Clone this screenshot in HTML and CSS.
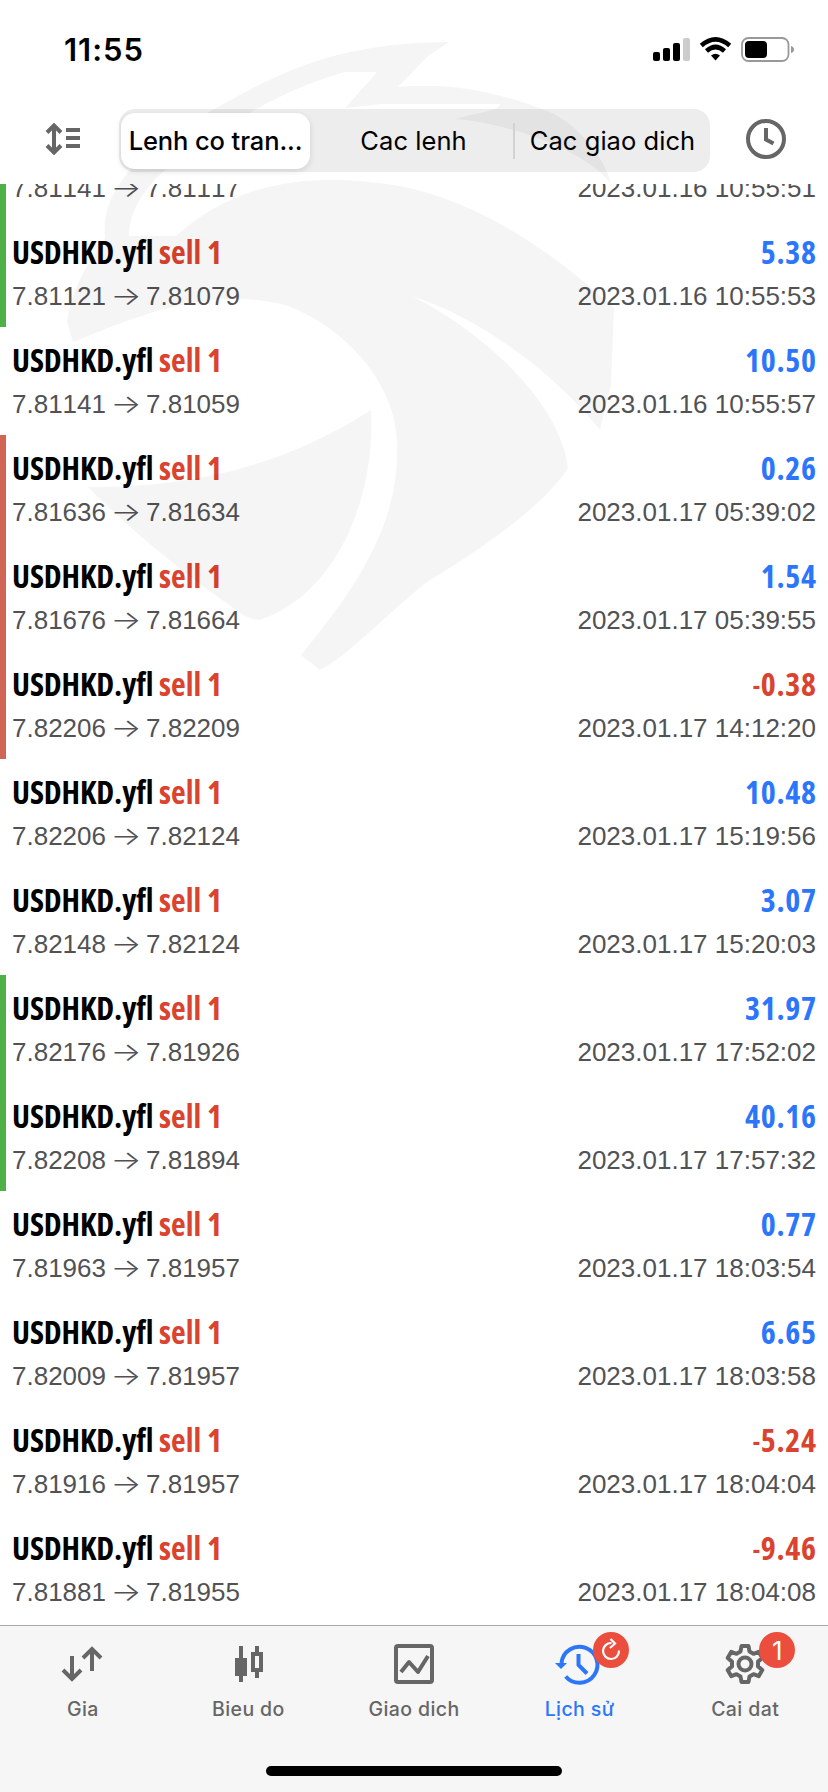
FILE: index.html
```html
<!DOCTYPE html>
<html lang="vi">
<head>
<meta charset="utf-8">
<title>Lịch sử</title>
<link rel="stylesheet" href="styles.css">
</head>
<body>
<div class="screen">
  <svg class="watermark" width="828" height="700" viewBox="0 0 828 700" aria-hidden="true">
    <path d="M105 238 C102 205 118 180 145 155 C165 137 190 121 220 106 C280 72 340 42 449 42 L428 56 L398 87 C450 82 500 92 550 112 C580 126 606 160 611 184 C590 155 520 125 456 119 C480 112 500 110 500 104 L384 104 L345 108 L377 72 L345 72 C310 82 260 102 215 136 C150 172 130 205 129 236 L176 236 C240 178 320 172 400 186 C470 200 540 240 614 308 L611 385 L600 430 C560 380 490 322 412 296 C480 330 560 400 568 468 C545 505 480 550 430 580 C390 610 350 655 320 670 L301 655 C350 595 398 530 397 450 C400 390 350 330 288 306 C210 285 140 315 73 342 L67 322 C70 295 84 268 105 238 Z"/>
    <path d="M88 487 C200 488 290 462 371 410 C376 500 335 595 260 620 C245 620 235 608 222 600 C180 570 130 530 88 487 Z"/>
  </svg>

  <div class="status">
    <span class="time">11:55</span>
    <svg width="146" height="28" viewBox="0 0 146 28">
      <rect x="1" y="15" width="7" height="9" rx="2"/><rect x="11" y="11" width="7" height="13" rx="2"/><rect x="21" y="6" width="7" height="18" rx="2"/><rect x="31" y="1" width="7" height="23" rx="2" fill="#ccc"/>
      <g fill="none" stroke="#000" stroke-width="4.600"><path d="M49.300 8.600 Q63.500 -3.800 77.700 8.600"/><path d="M54.500 14 Q63.500 6 72.500 14"/></g><path d="M59 18.500 Q63.500 15 68 18.500 L63.500 23.500Z"/>
      <rect x="90" y="1" width="46.500" height="23" rx="6.500" fill="none" stroke="#999" stroke-width="1.800"/><rect x="93" y="4" width="22" height="17" rx="4"/><path d="M139 9 Q142 10 142 12.500 Q142 15 139 16Z" fill="#999"/>
    </svg>
  </div>

  <header class="nav">
    <svg class="sort" width="36" height="32" viewBox="0 0 36 32" fill="none" stroke="#666" stroke-width="4"><path d="M9 3V29M2 9.500L9 2.500L16 9.500M2 22.500L9 29.500L16 22.500M21 7H35M21 15H35M21 23H35"/></svg>
    <div class="segments">
      <span class="seg on">Lenh co tran...</span><span class="seg mid">Cac lenh</span><span class="seg last">Cac giao dich</span>
    </div>
    <svg class="clock" width="40" height="40" viewBox="0 0 40 40" fill="none" stroke="#666" stroke-width="4"><circle cx="20" cy="20" r="18"/><path d="M20 9V20.500L27.500 24.500"/></svg>
  </header>

  <main class="list" id="list"></main>

  <nav class="tabs">
    <div class="tab"><svg width="44" height="40" viewBox="0 0 44 40" fill="none" stroke="#666" stroke-width="4"><path d="M11 12V36M2 26L11 35L20 26M31 27V4M22 14L31 5L40 14"/></svg><span>Gia</span></div>
    <div class="tab"><svg width="44" height="40" viewBox="0 0 44 40" fill="#666"><path d="M13 2h4v12h4v18h-4v6h-4v-6h-4v-18h4zM29 2h4v6h6v20h-4v6h-4v-6h-6v-20h4zM29 12v12h4v-12z" fill="none"/><path d="M13 2h4v12h4v18h-4v6h-4v-6H9V14h4zM29 2h4v6h4v20h-4v6h-4v-6h-4V8h4zM29 12v12h4V12z" fill-rule="evenodd"/></svg><span>Bieu do</span></div>
    <div class="tab"><svg width="44" height="40" viewBox="0 0 44 40" fill="none" stroke="#666" stroke-width="4" stroke-linejoin="round"><rect x="4" y="2" width="36" height="36" rx="2"/><path d="M9 28L17 18L26 28L36 12"/></svg><span>Giao dich</span></div>
    <div class="tab active"><svg width="44" height="40" viewBox="0 0 44 40" fill="none" stroke="#2b76fa" stroke-width="4"><path d="M3.500 19A18 18 0 1 1 7.700 32.500M20.500 10V21L29 29.500"/><path d="M-3 19H9L3 25Z" fill="#2b76fa" stroke="none"/></svg><span>Lịch sử</span>
      <b class="badge"><svg width="22" height="24" viewBox="0 0 22 24" fill="none" stroke="#fff" stroke-width="2.200"><path d="M11.500 5A8 8 0 1 0 19 12.500M10.500 1L15 5.500L10 10"/></svg></b></div>
    <div class="tab"><svg width="44" height="40" viewBox="0 0 44 40" fill="none" stroke="#666" stroke-width="4" stroke-linejoin="round"><path d="M18.500 2h7l1 5.500l4 2.300l5.200-2l3.600 6.200l-4.300 3.600v4.800l4.300 3.600l-3.600 6.200l-5.200-2l-4 2.300l-1 5.500h-7l-1-5.500l-4-2.300l-5.200 2l-3.600-6.200l4.300-3.600v-4.800l-4.300-3.600l3.600-6.200l5.200 2l4-2.300z"/><circle cx="22" cy="20" r="6.500"/></svg><span>Cai dat</span><b class="badge">1</b></div>
  </nav>
  <div class="home"></div>
</div>
<script src="app.js"></script>
</body>
</html>
```
FILE: styles.css
```css
body { margin: 0; background: #fff; }
.screen { position: relative; width: 828px; height: 1792px; overflow: hidden; display: flex; flex-direction: column; font-family: Inter, "Noto Sans", sans-serif; color: #000; }
.watermark { position: absolute; left: 0; top: 0; z-index: 1; fill: rgba(0, 0, 0, .04); pointer-events: none; }
.status { height: 109px; flex: none; box-sizing: border-box; padding: 31px 0 0 64px; display: flex; align-items: flex-start; }
.time { width: 588px; font-size: 31px; line-height: 38px; font-weight: 600; letter-spacing: 1px; }
.status svg { margin-top: 6px; }
.nav { height: 75px; flex: none; display: flex; align-items: flex-start; }
.sort { margin: 14px 38px 0 45px; }
.segments { width: 591px; height: 63px; border-radius: 16px; background: #ededed; display: flex; box-sizing: border-box; padding: 4px 2px; }
.seg { position: relative; z-index: 2; height: 56px; line-height: 55px; text-align: center; font-size: 25.500px; letter-spacing: .05px; white-space: nowrap; }
.on { width: 189px; border-radius: 14px; background: #fff; font-weight: 500; letter-spacing: -.1px; box-shadow: 0 2px 6px rgba(0, 0, 0, .12); }
.mid { width: 203px; padding-left: 4px; box-sizing: border-box; }
.last { width: 195px; text-indent: 4px; background: linear-gradient(#d2d2d2, #d2d2d2) 0 10px / 2px 36px no-repeat; }
.clock { margin: 10px 0 0 36px; }
.list { height: 1441px; flex: none; box-sizing: border-box; padding-bottom: 2px; overflow: hidden; display: flex; flex-direction: column; justify-content: flex-end; }
.row { height: 108px; flex: none; box-sizing: border-box; padding: 14px 12px 0 6px; border-left: 6px solid transparent; }
.tp { border-left-color: #50b048; }
.sl { border-left-color: #d06455; }
.line { display: flex; justify-content: space-between; }
.head { height: 48px; line-height: 38px; font-family: "Open Sans", "Noto Sans", sans-serif; font-stretch: 75%; font-weight: 700; font-size: 32px; }
.sym { letter-spacing: -.1px; }
.side { color: #d9432f; }
.profit { color: #2b76fa; letter-spacing: .7px; margin-right: -.7px; }
.profit.neg { color: #d9432f; }
.minus { font-size: 24px; vertical-align: 2px; line-height: 1; }
.info { font-family: "Liberation Sans", Arial, sans-serif; font-size: 26px; line-height: 30px; color: #525255; font-kerning: none; }
.prices { display: flex; }
.arrow { width: 40px; text-align: center; font-family: Inter, sans-serif; font-weight: 300; transform: scaleX(1.25); }
.tabs { height: 167px; flex: none; box-sizing: border-box; border-top: 1px solid #a9a9a9; background: #f6f6f6; display: flex; }
.tab { position: relative; flex: 1; display: flex; flex-direction: column; align-items: center; padding-top: 18px; color: #666; font-size: 19.500px; font-weight: 500; letter-spacing: .4px; }
.tab svg { overflow: visible; }
.tab span { margin-top: 13px; line-height: 24px; }
.tab.active { color: #2b76fa; }
.badge { position: absolute; left: 96px; top: 6px; width: 36px; height: 36px; border-radius: 50%; background: #eb4e3d; color: #fff; display: flex; align-items: center; justify-content: center; font-size: 26px; font-weight: 400; letter-spacing: 0; }
.tab:last-child .badge { left: 97px; }
.home { position: absolute; left: 266px; top: 1766px; width: 296px; height: 10px; border-radius: 5px; background: #000; }
```
FILE: app.js
```js
const deals = [
  ["7.81141", "7.81117", "2023.01.16 10:55:51", "", "tp"],
  ["7.81121", "7.81079", "2023.01.16 10:55:53", "5.38", "tp"],
  ["7.81141", "7.81059", "2023.01.16 10:55:57", "10.50", ""],
  ["7.81636", "7.81634", "2023.01.17 05:39:02", "0.26", "sl"],
  ["7.81676", "7.81664", "2023.01.17 05:39:55", "1.54", "sl"],
  ["7.82206", "7.82209", "2023.01.17 14:12:20", "-0.38", "sl"],
  ["7.82206", "7.82124", "2023.01.17 15:19:56", "10.48", ""],
  ["7.82148", "7.82124", "2023.01.17 15:20:03", "3.07", ""],
  ["7.82176", "7.81926", "2023.01.17 17:52:02", "31.97", "tp"],
  ["7.82208", "7.81894", "2023.01.17 17:57:32", "40.16", "tp"],
  ["7.81963", "7.81957", "2023.01.17 18:03:54", "0.77", ""],
  ["7.82009", "7.81957", "2023.01.17 18:03:58", "6.65", ""],
  ["7.81916", "7.81957", "2023.01.17 18:04:04", "-5.24", ""],
  ["7.81881", "7.81955", "2023.01.17 18:04:08", "-9.46", ""]
];
// The topmost row is scrolled under the header, so only its second line is filled.
const head = profit => profit && `<span><span class="sym">USDHKD.yfl</span> <span class="side">sell 1</span></span><span class="profit ${profit[0] === "-" ? "neg" : ""}">${profit.replace("-", '<span class="minus">-</span>')}</span>`;
document.getElementById("list").innerHTML = deals.map(([open, close, time, profit, mark]) => `
  <section class="row ${mark}">
    <div class="line head">${head(profit)}</div>
    <div class="line info"><span class="prices">${open}<span class="arrow">→</span>${close}</span><span>${time}</span></div>
  </section>`).join("");
```
